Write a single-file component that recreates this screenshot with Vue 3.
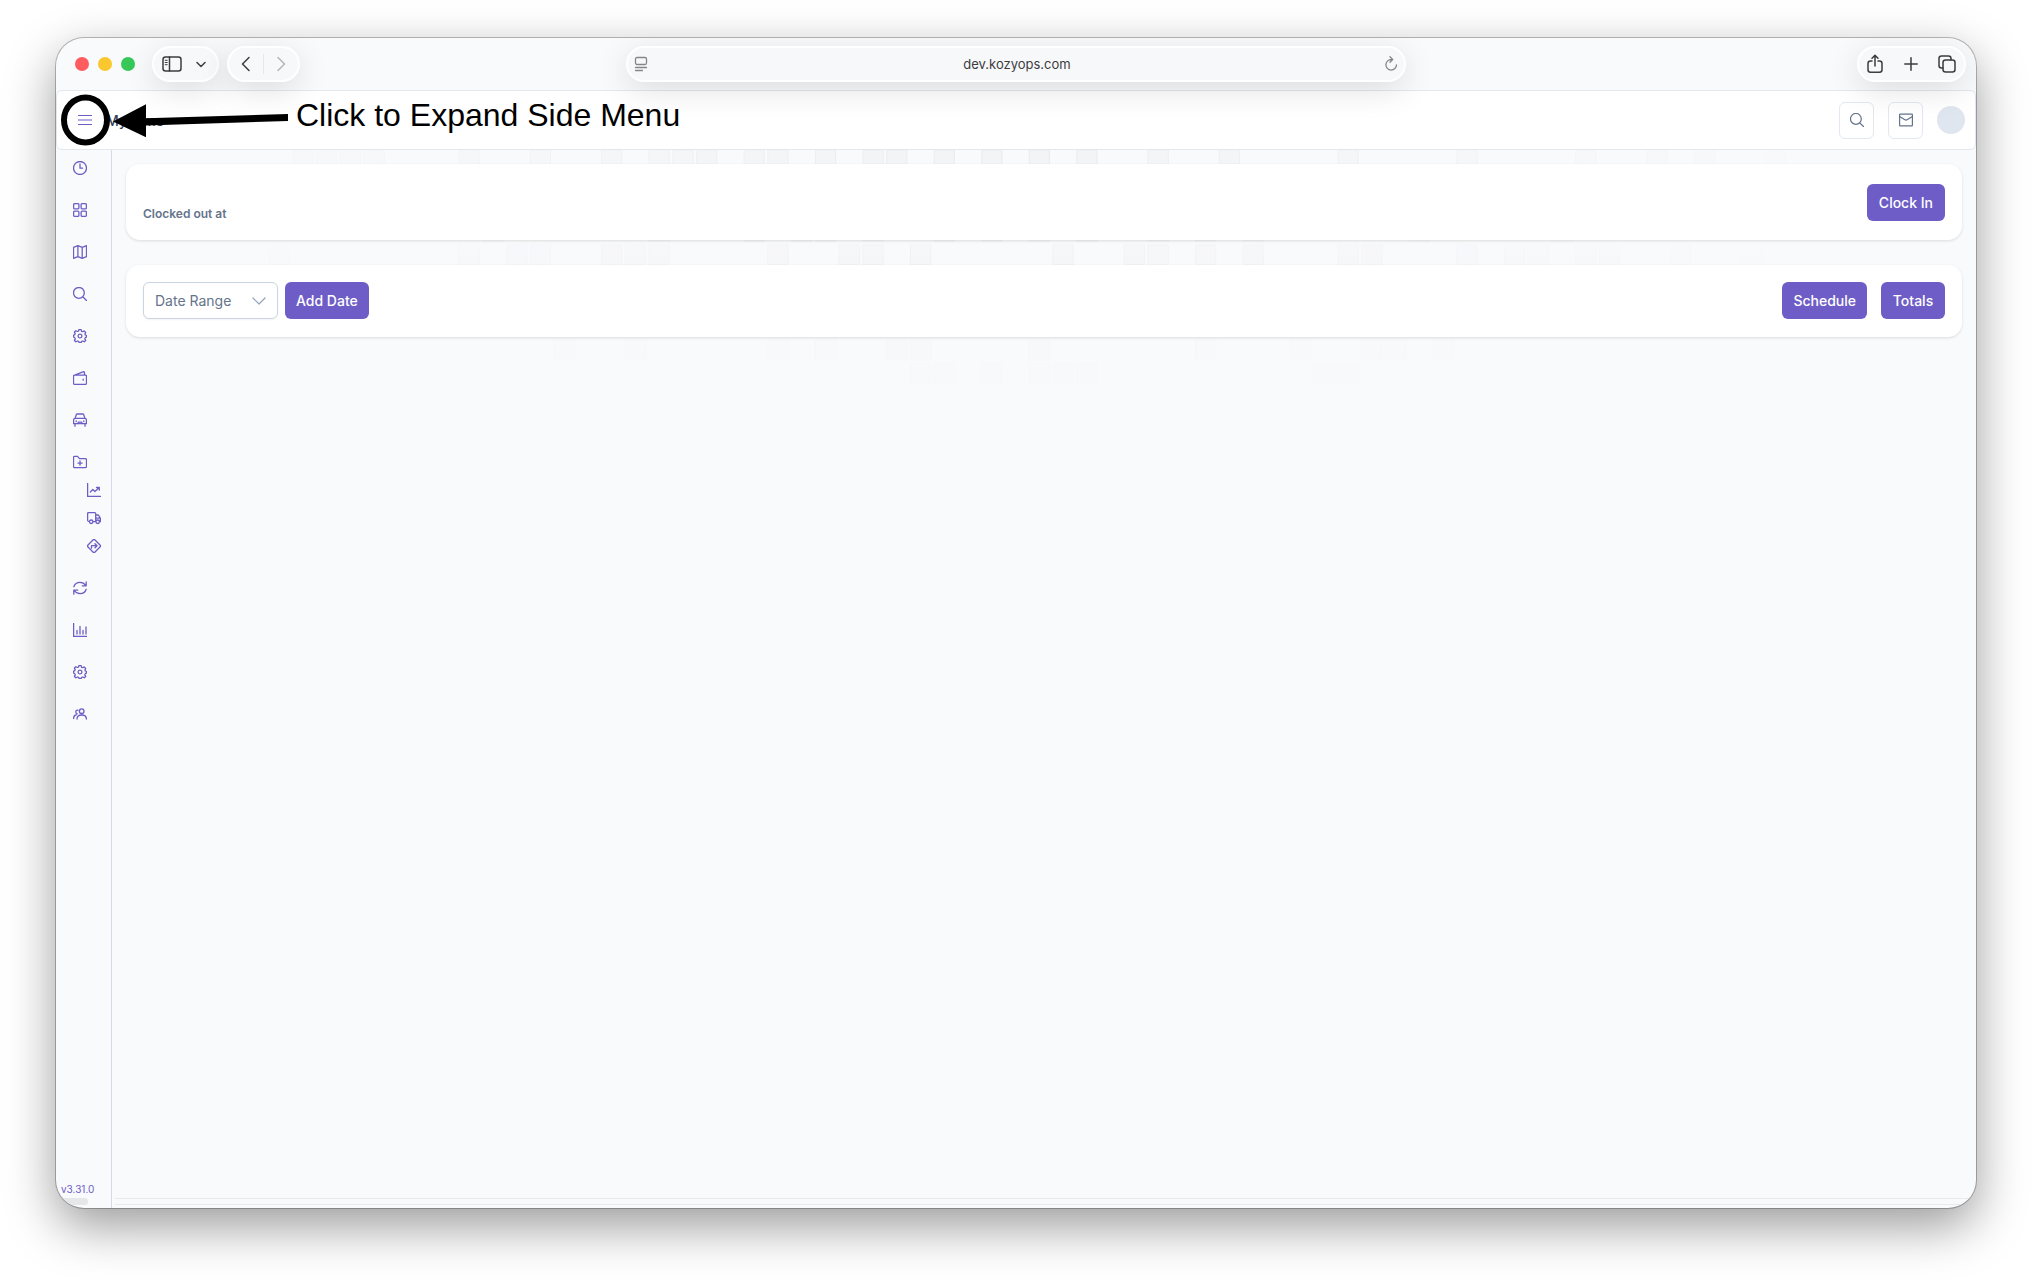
<script setup>
const menu = [
  { icon: 'clock', label: 'My time' },
  { icon: 'grid', label: 'Dashboard' },
  { icon: 'map', label: 'Map' },
  { icon: 'search', label: 'Search' },
  { icon: 'cog', label: 'Operations' },
  { icon: 'wallet', label: 'Wallet' },
  { icon: 'car', label: 'Vehicles' },
  {
    icon: 'folder',
    label: 'Projects',
    children: [
      { icon: 'trend', label: 'Trends' },
      { icon: 'truck', label: 'Deliveries' },
      { icon: 'directions', label: 'Routes' },
    ],
  },
  { icon: 'refresh', label: 'Sync' },
  { icon: 'chart', label: 'Reports' },
  { icon: 'cog', label: 'Settings' },
  { icon: 'users', label: 'Users' },
]

const icons = {
  clock: 'M7 .5a6.5 6.5 0 1 0 0 13a6.5 6.5 0 1 0 0-13M7 3v4.2h2.6',
  grid: 'M1.8.6h2.9q1.2 0 1.2 1.2v2.9q0 1.2-1.2 1.2H1.8Q.6 5.9.6 4.7V1.8Q.6.6 1.8.6M9.3.6h2.9q1.2 0 1.2 1.2v2.9q0 1.2-1.2 1.2H9.3q-1.2 0-1.2-1.2V1.8q0-1.2 1.2-1.2M1.8 8.1h2.9q1.2 0 1.2 1.2v2.9q0 1.2-1.2 1.2H1.8q-1.2 0-1.2-1.2V9.3q0-1.2 1.2-1.2M9.3 8.1h2.9q1.2 0 1.2 1.2v2.9q0 1.2-1.2 1.2H9.3q-1.2 0-1.2-1.2V9.3q0-1.2 1.2-1.2',
  map: 'M.5 2.3 4.9.7l4.3 1.6L13.5.7v10.9l-4.3 1.7-4.3-1.7-4.4 1.7zM4.9.7v10.9M9.2 2.3v11',
  search: 'M5.9.5a5.4 5.4 0 1 0 0 10.8a5.4 5.4 0 1 0 0-10.8M9.8 9.8l3.7 3.7',
  cog: 'M5.9.6h2.2l.5 1.7 1.1.4 1.5-.8 1.5 1.5-.8 1.5.4 1.1 1.1.4v1.7l-1.2.7-.4 1.1.9 1.5-1.5 1.4-1.5-.8-1.1.4-.5 1.1h-2l-.5-1.1-1.2-.4-1.5.8-1.5-1.4.9-1.5-.5-1.2L.6 8V6.2l1.1-.5.5-1.1-.8-1.5 1.5-1.4 1.5.8 1.1-.4zM7 5.1a1.9 1.9 0 1 0 0 3.8a1.9 1.9 0 1 0 0-3.8',
  wallet: 'M1.6 4.1h10.8q1.1 0 1.1 1.1v7q0 1.2-1.1 1.2H1.6Q.5 13.4.5 12.2v-7Q.5 4.1 1.6 4.1L10 .8q1.2-.3 1.5.8v2.3M10.2 8.2v1',
  car: 'M2 5.4 3.3 1.8Q3.5 1 4.4 1h5.2q.9 0 1.1.8L12 5.4M2 5.4h10q1.4.3 1.4 1.7v3.6H.6V7.1Q.6 5.7 2 5.4M2 10.9v2.3M12 10.9v2.3M3.2 7.8v.8M10.8 7.8v.8M4.6 10.7l.8-1.6h3.2l.8 1.6',
  folder: 'M1.5 1.4h3l2 2.2h5.7q1.3 0 1.3 1.3v6.5q0 1.3-1.3 1.3H1.8Q.5 12.7.5 11.4v-9q0-1 1-1M7 6v4.2M4.9 8.1h4.2',
  trend: 'M.6.5v13h13M3.4 9l2.4-2.6 2.1 2.1L12 4.8M9.5 4.5h2.8v2.7',
  truck: 'M1.5 1.7h6.3q.9 0 .9.9v8H6M2.5 10.6Q.6 10.6.6 9V2.6q0-.9.9-.9M8.7 4h2.7l2 3.3v3.3h-1M8.7 7.2h4.7M4.2 9a1.7 1.7 0 1 0 0 3.5a1.7 1.7 0 1 0 0-3.5M10.7 9a1.7 1.7 0 1 0 0 3.5a1.7 1.7 0 1 0 0-3.5',
  directions: 'M6.2.8q.8-.6 1.6 0l5.4 5.4q.6.8 0 1.6l-5.4 5.4q-.8.6-1.6 0L.8 7.8q-.6-.8 0-1.6zM4.5 9.2V6.7h5.2M8 4.7l2 2-2 2',
  refresh: 'M.8 5.7Q2.3 1.3 7 1.3q3.6 0 5.8 3.2M13.2.8v4H9.3M13.2 8.3Q11.7 12.7 7 12.7q-3.600 0-5.800-3.200M.8 13.200v-4h3.900',
  chart: 'M.6.5v13h13M4 11V7.5M7 11V3.5M10 11V7.5M13 11V4',
  users: 'M8.7 1.9a2.300 2.300 0 1 0 0 4.600a2.300 2.300 0 1 0 0-4.600M4 12q0-4 4.700-4t4.700 4M5 3.200q-2.200-.2-2.200 1.800 0 1.500 1.400 1.800M.6 11.500q0-3.300 2.700-3.700',
}

// filled columns per row of the backdrop
const rows = [
  [0, [-22, -21, -20, -19, -15, -12, -9, -7, -6, -5, -3, -2, 0, 2, 3, 5, 7, 9, 11, 14, 17, 22, 27, 32, 35, 37, 40]],
  [3, [-14, -7, -3, -1, 0, 2, 5, 7, 9, 11, 14, 16, 18, 25, 31]],
  [4, [-23, -15, -13, -12, -9, -8, -7, -2, 1, 2, 4, 10, 13, 14, 16, 18, 22, 23, 27, 29, 30, 32, 33, 36, 39]],
  [8, [-11, -8, -2, 0, 3, 4, 9, 16, 20, 23, 24, 26]],
  [9, [4, 5, 7, 9, 10, 11, 21, 22]],
]

// cells fade out sideways from the middle and towards the bottom
const cells = rows.flatMap(([row, cols]) =>
  cols.map((col) => ({
    x: 711 + col * 24,
    y: row * 24,
    opacity: Math.max(0.1, 1 - Math.abs(col - 7) / 36) * (1 - row / 10),
  })),
)
</script>

<template>
  <div class="desktop">
    <div class="window">
      <div class="toolbar">
        <div class="toolbar-side">
          <div class="lights">
            <button type="button" class="light red" aria-label="Close" />
            <button type="button" class="light yellow" aria-label="Minimize" />
            <button type="button" class="light green" aria-label="Zoom" />
          </div>
          <div class="pill sidebar-pill">
            <button type="button" aria-label="Show sidebar">
              <svg width="20" height="16" viewBox="0 0 20 16">
                <rect x="1" y="1" width="18" height="14" rx="2.5" />
                <path d="M7.5 1v14" />
                <path d="M3.2 4.3h2M3.2 6.5h2M3.2 8.7h2" stroke-width="1" />
              </svg>
            </button>
            <button type="button" aria-label="Tab groups">
              <svg width="10" height="7" viewBox="0 0 10 7"><path d="m1 1.500 4 4 4-4" /></svg>
            </button>
          </div>
          <div class="pill nav-pill">
            <button type="button" aria-label="Back">
              <svg width="10" height="16" viewBox="0 0 10 16"><path d="M8 1.500 1.500 8 8 14.500" /></svg>
            </button>
            <span class="pill-divider" />
            <button type="button" class="faded" aria-label="Forward">
              <svg width="10" height="16" viewBox="0 0 10 16"><path d="M2 1.500 8.500 8 2 14.500" /></svg>
            </button>
          </div>
        </div>
        <div class="pill address">
          <button type="button" aria-label="Page menu">
            <svg width="14" height="16" viewBox="0 0 14 16" class="grey">
              <rect x="1.5" y="1.5" width="11" height="7" rx="1.5" />
              <path d="M1.500 11.500h11M1.500 14.500h7" />
            </svg>
          </button>
          <input type="text" value="dev.kozyops.com" aria-label="Address">
          <button type="button" aria-label="Reload">
            <svg width="14" height="16" viewBox="0 0 14 16" class="grey">
              <path d="M7.5 3.5a5.3 5.3 0 1 0 5 5.300M6 .8l2.700 2.700L6 6.200" />
            </svg>
          </button>
        </div>
        <div class="toolbar-side end">
          <div class="pill actions-pill">
            <button type="button" aria-label="Share">
              <svg width="16" height="20" viewBox="0 0 16 20">
                <path d="M5 7H3.5Q1 7 1 9.5v6.3q0 2.5 2.5 2.5h9q2.5 0 2.5-2.5V9.5Q15 7 12.5 7H11M8 12V1.5M5 4.3l3-3 3 3" />
              </svg>
            </button>
            <button type="button" aria-label="New tab">
              <svg width="14" height="14" viewBox="0 0 14 14"><path d="M7 .8v12.4M.8 7h12.4" /></svg>
            </button>
            <button type="button" aria-label="Tab overview">
              <svg width="18" height="18" viewBox="0 0 18 18">
                <rect x="5" y="5" width="12" height="12" rx="2.5" />
                <path d="M5 13H3.5Q1 13 1 10.5v-7Q1 1 3.5 1h7Q13 1 13 3.5V5" />
              </svg>
            </button>
          </div>
        </div>
      </div>

      <header class="app-header">
        <button type="button" class="burger" aria-label="Expand side menu">
          <svg width="14" height="12" viewBox="0 0 14 12"><path d="M.5 1.500h13M.5 6h13M.5 10.500h13" /></svg>
        </button>
        <h1>My Time</h1>
        <div class="header-tools">
          <button type="button" class="square" aria-label="Search">
            <svg width="14" height="14" viewBox="0 0 14 14"><path :d="icons.search" /></svg>
          </button>
          <button type="button" class="square" aria-label="Messages">
            <svg width="14" height="14" viewBox="0 0 14 14">
              <rect x=".6" y="1.2" width="12.8" height="11.6" rx=".6" />
              <path d="M.6 3.5 5.5 6.600q1.500 1 3 0l4.900-3.100" />
            </svg>
          </button>
          <button type="button" class="avatar" aria-label="Account" />
        </div>
        <div class="callout">
          <svg width="239" height="60" viewBox="0 0 239 60" aria-hidden="true">
            <ellipse cx="28.5" cy="29" rx="21.5" ry="22.5" fill="none" stroke="#000" stroke-width="6" />
            <path d="M56 30.500 89 13.300v13.900L231 23v7L89 34.500v11.700z" />
          </svg>
          <span>Click to Expand Side Menu</span>
        </div>
      </header>

      <div class="app-body">
        <aside class="sidebar">
          <nav aria-label="Main">
            <template v-for="item in menu" :key="item.label">
              <a href="#" :aria-label="item.label">
                <svg width="14" height="14" viewBox="0 0 14 14"><path :d="icons[item.icon]" /></svg>
              </a>
              <div v-if="item.children" class="submenu">
                <a v-for="child in item.children" :key="child.label" href="#" :aria-label="child.label">
                  <svg width="14" height="14" viewBox="0 0 14 14"><path :d="icons[child.icon]" /></svg>
                </a>
              </div>
            </template>
          </nav>
          <div class="version">v3.31.0</div>
          <div class="scroll-thumb" />
        </aside>

        <main>
          <svg class="backdrop" viewBox="0 0 1883 240" aria-hidden="true">
            <rect
              v-for="cell in cells"
              :key="`${cell.x}-${cell.y}`"
              :x="cell.x"
              :y="cell.y"
              :opacity="cell.opacity"
              width="20"
              height="20"
            />
          </svg>
          <section class="card clock-card">
            <p>Clocked out at</p>
            <button type="button" class="btn">Clock In</button>
          </section>
          <section class="card">
            <div class="select">
              <select aria-label="Date range">
                <option>Date Range</option>
              </select>
              <svg width="14" height="14" viewBox="0 0 14 14"><path d="m1 4 6 6 6-6" /></svg>
            </div>
            <button type="button" class="btn">Add Date</button>
            <div class="card-end">
              <button type="button" class="btn">Schedule</button>
              <button type="button" class="btn">Totals</button>
            </div>
          </section>
          <div class="table-edge" />
        </main>
      </div>
    </div>
  </div>
</template>

<style>
body {
  margin: 0;
  background: #fff;
}
</style>

<style scoped>
* {
  box-sizing: border-box;
}

button,
input,
select {
  margin: 0;
  padding: 0;
  border: 0;
  background: none;
  font: inherit;
  color: inherit;
}

button {
  cursor: pointer;
}

svg {
  display: block;
  fill: none;
  stroke: currentColor;
  stroke-linecap: round;
  stroke-linejoin: round;
}

.desktop {
  display: flex;
  min-height: 100vh;
  padding: 38px 56px 74px;
  overflow: hidden;
  font-family: Inter, sans-serif;
  font-size: 14px;
}

.window {
  display: flex;
  flex: 1;
  flex-direction: column;
  min-width: 0;
  overflow: hidden;
  border-radius: 28px;
  background: #f9fafc;
  box-shadow: 0 0 0 1px rgba(0, 0, 0, 0.25), 0 18px 50px rgba(0, 0, 0, 0.4);
}

/* browser toolbar */
.toolbar {
  position: relative;
  z-index: 1;
  display: grid;
  grid-template-columns: 1fr 780px 1fr;
  align-items: center;
  height: 52px;
  color: #3c3c3e;
}

.toolbar-side {
  display: flex;
  align-items: center;
  gap: 8px;
  padding: 0 10px 0 19px;
}

.toolbar-side.end {
  justify-content: flex-end;
}

.lights {
  display: flex;
  gap: 9px;
  margin-right: 9px;
}

.light {
  width: 14px;
  height: 14px;
  border-radius: 50%;
}

.red {
  background: #ff5c60;
}

.yellow {
  background: #fac72e;
}

.green {
  background: #38c759;
}

.pill {
  display: flex;
  align-items: center;
  justify-content: space-between;
  height: 36px;
  border: 2px solid #fff;
  border-radius: 18px;
  background: #f7f8fa;
  box-shadow: 0 8px 32px rgba(0, 0, 0, 0.12);
}

.pill svg {
  stroke-width: 1.5;
}

.sidebar-pill {
  width: 67px;
  padding: 0 11px 0 8px;
}

.nav-pill {
  width: 73px;
  padding: 0 12px;
}

.pill-divider {
  width: 1px;
  height: 20px;
  background: #e6e7e9;
}

.faded {
  color: #b4b5b7;
}

.address {
  padding: 0 6px;
}

.address input {
  flex: 1;
  min-width: 0;
  padding-left: 2px;
  font-size: 13px;
  text-align: center;
}

.pill .grey {
  color: #858688;
  stroke-width: 1.3;
}

.actions-pill {
  width: 109px;
  padding: 0 8px;
}

/* app header */
.app-header {
  position: relative;
  display: flex;
  align-items: center;
  height: 60px;
  padding: 0 10px 0 21px;
  border: 1px solid #e2e8f0;
  border-radius: 6px;
  background: #fff;
}

.burger {
  color: #6e5dc6;
}

.burger svg {
  stroke-width: 1.2;
}

h1 {
  margin: 0 0 0 14px;
  color: #334155;
  font-size: 14px;
  font-weight: 500;
}

.header-tools {
  display: flex;
  align-items: center;
  gap: 14px;
  margin-left: auto;
  color: #64748b;
}

.header-tools svg {
  stroke-width: 1.2;
}

.square {
  display: grid;
  place-items: center;
  width: 35px;
  height: 37px;
  border: 1px solid #e2e8f0;
  border-radius: 6px;
}

.avatar {
  width: 28px;
  height: 28px;
  border-radius: 50%;
  background: #dfe6ef;
}

.callout {
  position: absolute;
  top: 0;
  left: 0;
  display: flex;
  pointer-events: none;
  color: #000;
  font-family: "Liberation Sans", Arial, sans-serif;
  font-size: 32px;
  line-height: 48px;
  white-space: nowrap;
}

.callout svg {
  fill: #000;
  stroke: none;
}

/* sidebar */
.app-body {
  display: flex;
  flex: 1;
}

.sidebar {
  display: flex;
  flex-direction: column;
  width: 56px;
  border-right: 1px solid #d9d6ee;
  color: #6e5dc6;
}

nav {
  display: flex;
  flex-direction: column;
  gap: 28px;
  padding: 11px 0 0 17px;
}

nav a {
  width: 14px;
  color: inherit;
}

nav svg {
  stroke-width: 1.3;
}

.submenu {
  display: flex;
  flex-direction: column;
  gap: 14px;
  margin-top: -14px;
  padding-left: 14px;
}

.version {
  margin-top: auto;
  padding-left: 5px;
  font-size: 10px;
  line-height: 18px;
}

.scroll-thumb {
  width: 32px;
  height: 7px;
  margin-bottom: 3px;
  border-radius: 0 4px 4px 0;
  background: #e6e7e9;
}

/* content */
main {
  position: relative;
  display: flex;
  flex: 1;
  flex-direction: column;
  min-width: 0;
  padding-top: 14px;
}

.backdrop {
  position: absolute;
  top: 0;
  left: 0;
  width: 100%;
  fill: #f3f4f6;
  stroke: #eaebed;
}

.card {
  position: relative;
  display: flex;
  align-items: center;
  gap: 7px;
  margin: 0 14px 25px;
  padding: 17px 17px 18px;
  border-radius: 14px;
  background: #fff;
  box-shadow: 0 1px 3px rgba(0, 0, 0, 0.12);
}

.clock-card {
  justify-content: space-between;
  padding: 20px 17px 19px;
}

.clock-card p {
  align-self: flex-end;
  margin: 0;
  color: #64748b;
  font-size: 12px;
  font-weight: 600;
  line-height: 14px;
}

.card-end {
  display: flex;
  gap: 14px;
  margin-left: auto;
}

.btn {
  min-width: 64px;
  height: 37px;
  padding: 0 11px;
  border-radius: 6px;
  background: #6e5dc6;
  color: #fff;
  font-weight: 500;
}

.clock-card .btn {
  padding: 0 12px;
}

.select {
  display: grid;
  align-items: center;
  width: 135px;
}

.select select,
.select svg {
  grid-area: 1 / 1;
}

.select select {
  height: 37px;
  padding: 0 11px;
  border: 1px solid #cbd5e1;
  border-radius: 6px;
  background: #fff;
  box-shadow: 0 1px 2px rgba(18, 18, 23, 0.05);
  color: #64748b;
  appearance: none;
}

.select svg {
  justify-self: end;
  margin-right: 12px;
  color: #94a3b8;
  stroke-width: 1.2;
  pointer-events: none;
}

.table-edge {
  height: 7px;
  margin: auto 0 3px 3px;
  border: solid #e9eaec;
  border-width: 1px 0;
}
</style>
